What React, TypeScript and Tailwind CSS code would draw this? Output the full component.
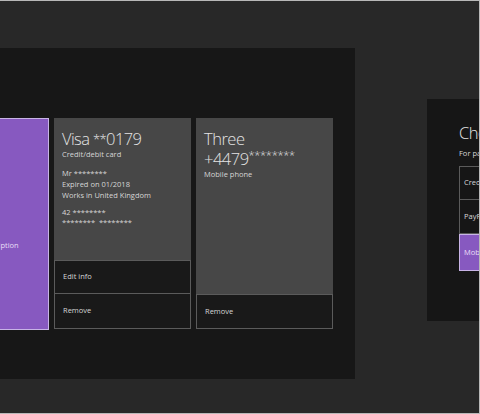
export default function App() {
  return (
    <div className="w-[480px] h-[414px] bg-[#282828] border-t border-r border-b border-[#b8b8b8] overflow-hidden flex items-start font-['Open_Sans',sans-serif] text-[#e4e4e4]">
      {/* payment options panel */}
      <div className="w-[355px] h-[331px] shrink-0 mt-[47px] bg-[#171717] pt-[70px] overflow-hidden">
        <div className="flex items-start gap-[5px]">
          <div className="ml-[-88px] w-[137px] h-[212px] shrink-0 bg-[#8759c0] border border-[#c8b4e6] pt-[121px] pl-[62px] text-[7.5px] text-[#e9def7]">
            Subscription
          </div>

          <div className="w-[137px] h-[211px] shrink-0 flex flex-col">
            <div className="flex-1 bg-[#474747] px-2 pt-[11px]">
              <div className="text-[16.5px] leading-[20px] font-light tracking-[-0.6px]">
                Visa <span className="text-[13px] align-top">**</span>0179
              </div>
              <div className="text-[7.5px] leading-[10px] text-[#d6d6d6]">Credit/debit card</div>
              <div className="mt-[9px] text-[7.5px] leading-[11px] text-[#d6d6d6]">
                <div>Mr ********</div>
                <div>Expired on 01/2018</div>
                <div>Works in United Kingdom</div>
              </div>
              <div className="mt-[6px] text-[7.5px] leading-[10px] text-[#d6d6d6]">
                <div>42 ********</div>
                <div>******** &nbsp;********</div>
              </div>
            </div>
            <div className="h-[34px] border border-[#5b5b5b] bg-[#191919] px-2 flex items-center text-[7.5px] text-[#d6d6d6]">
              Edit info
            </div>
            <div className="h-[35px] border border-t-0 border-[#5b5b5b] bg-[#191919] px-2 flex items-center text-[7.5px] text-[#d6d6d6]">
              Remove
            </div>
          </div>

          <div className="w-[137px] h-[211px] shrink-0 flex flex-col">
            <div className="flex-1 bg-[#474747] px-2 pt-[11px]">
              <div className="text-[16.5px] leading-[20px] font-light tracking-[-0.5px]">Three</div>
              <div className="text-[16.5px] leading-[20px] font-light tracking-[-0.5px]">
                +4479<span className="text-[11px] leading-[11px] align-top tracking-[-0.3px]">********</span>
              </div>
              <div className="text-[7.5px] leading-[10px] text-[#d6d6d6]">Mobile phone</div>
            </div>
            <div className="h-[35px] border border-[#5b5b5b] bg-[#191919] px-2 flex items-center text-[7.5px] text-[#d6d6d6]">
              Remove
            </div>
          </div>
        </div>
      </div>

      {/* choose payment dialog */}
      <div className="ml-[72px] mt-[98px] w-[120px] h-[222px] shrink-0 bg-[#161616] pl-8 pt-[24px] whitespace-nowrap">
        <div className="text-[16.5px] leading-[20px] font-light tracking-[-0.5px]">Choose a way to pay</div>
        <div className="mt-[5px] text-[7.5px] leading-[10px] text-[#d6d6d6]">For payment</div>
        <div className="mt-[8px] flex flex-col">
          <div className="h-[34px] border border-[#5b5b5b] px-1 flex items-center text-[7.5px] text-[#d6d6d6]">Credit/debit card</div>
          <div className="h-[34px] border border-t-0 border-[#5b5b5b] px-1 flex items-center text-[7.5px] text-[#d6d6d6]">PayPal</div>
          <div className="h-[37px] bg-[#8759c0] border border-[#c8b4e6] px-1 flex items-center text-[7.5px] text-[#e9def7]">Mobile phone</div>
        </div>
      </div>
    </div>
  );
}
